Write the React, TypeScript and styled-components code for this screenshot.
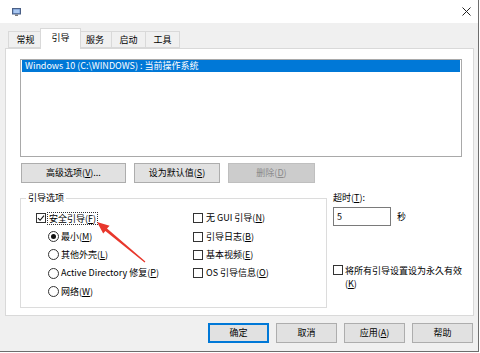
import React from "react";
import styled, { createGlobalStyle } from "styled-components";

const Global = createGlobalStyle`
  html, body { margin: 0; padding: 0; background: #fff; }
  body {
    font-family: "Noto Sans CJK SC", "Noto Sans", sans-serif;
    font-size: 9px;
    line-height: 12px;
    color: #000;
  }
  * { box-sizing: border-box; }
  u { text-underline-offset: 1px; }
`;

const Window = styled.div`
  position: relative;
  width: 479px;
  height: 352px;
  border-right: 1px solid #6d6d6d;
  border-bottom: 1px solid #6d6d6d;
  display: flex;
  flex-direction: column;
  background: #f0f0f0;
  overflow: hidden;
`;

const TitleBar = styled.div`
  height: 23px;
  flex: none;
  background: #fff;
  display: flex;
  align-items: center;
  justify-content: space-between;
  padding: 0 7px 0 12px;
`;

const TabStrip = styled.div`
  height: 25px;
  flex: none;
  display: flex;
  align-items: flex-end;
  padding-left: 9px;
  position: relative;
  z-index: 2;
`;

const Tab = styled.div<{ $active?: boolean; $w: number }>`
  width: ${(p) => p.$w}px;
  height: ${(p) => (p.$active ? 21 : 17)}px;
  margin: ${(p) => (p.$active ? "0 -2px -1px -3px" : "0 0 0 -1px")};
  border: 1px solid #d9d9d9;
  border-bottom: ${(p) => (p.$active ? "none" : "1px solid #d9d9d9")};
  background: ${(p) => (p.$active ? "#fff" : "#f0f0f0")};
  display: flex;
  align-items: center;
  justify-content: center;
  padding-bottom: ${(p) => (p.$active ? 2 : 0)}px;
  position: relative;
  z-index: ${(p) => (p.$active ? 2 : 1)};
`;

const Panel = styled.div`
  height: 268px;
  flex: none;
  margin: 0 4px 0 5px;
  border: 1px solid #d9d9d9;
  background: #fff;
  padding: 10px 11px 0 14px;
  display: flex;
  flex-direction: column;
`;

const ListBox = styled.div`
  height: 98px;
  border: 1px solid #a9a9a9;
  padding: 0 1px;
`;

const ListRow = styled.div<{ $selected?: boolean }>`
  height: 12px;
  line-height: 12px;
  padding-left: 3px;
  background: ${(p) => (p.$selected ? "#0078d7" : "transparent")};
  color: ${(p) => (p.$selected ? "#fff" : "#000")};
  white-space: nowrap;
`;

const ButtonRow = styled.div`
  display: flex;
  margin-top: 6px;
  padding-left: 1px;
  gap: 8px;
`;

const Button = styled.div<{ $w: number; $disabled?: boolean; $default?: boolean }>`
  width: ${(p) => p.$w}px;
  height: 20px;
  flex: none;
  border: 1px solid ${(p) => (p.$default ? "#0078d7" : p.$disabled ? "#bfbfbf" : "#adadad")};
  box-shadow: ${(p) => (p.$default ? "inset 0 0 0 1px #0078d7" : "none")};
  background: ${(p) => (p.$disabled ? "#cccccc" : "#e1e1e1")};
  color: ${(p) => (p.$disabled ? "#8a8a8a" : "#000")};
  display: flex;
  align-items: center;
  justify-content: center;
  white-space: nowrap;
`;

const Lower = styled.div`
  display: flex;
  margin-top: 9px;
`;

const Group = styled.fieldset`
  width: 313px;
  height: 116px;
  margin: 0;
  border: 1px solid #dcdcdc;
  padding: 5px 0 0 15px;
  display: flex;
`;

const Legend = styled.legend`
  margin-left: -10px;
  padding: 0 2px;
  line-height: 12px;
`;

const Column = styled.div<{ $w?: number }>`
  display: flex;
  flex-direction: column;
  width: ${(p) => (p.$w ? `${p.$w}px` : "auto")};
`;

const OptionRow = styled.div<{ $indent?: number; $gap?: number }>`
  height: 18.4px;
  display: flex;
  align-items: center;
  padding-left: ${(p) => p.$indent ?? 0}px;
  gap: ${(p) => p.$gap ?? 2}px;
  white-space: nowrap;
`;

const Box = styled.span`
  width: 10px;
  height: 10px;
  flex: none;
  border: 1px solid #333;
  background: #fff;
  display: inline-flex;
  align-items: center;
  justify-content: center;
`;

const Radio = styled.span<{ $on?: boolean }>`
  width: 11px;
  height: 11px;
  flex: none;
  border: 1px solid #333;
  border-radius: 50%;
  background: #fff;
  display: inline-flex;
  align-items: center;
  justify-content: center;
  &::after {
    content: "";
    display: ${(p) => (p.$on ? "block" : "none")};
    width: 5px;
    height: 5px;
    border-radius: 50%;
    background: #111;
  }
`;

const Focus = styled.span`
  outline: 1px dotted #333;
  outline-offset: 0;
  padding: 0 1px;
  line-height: 11px;
`;

const Side = styled.div`
  margin-left: 6px;
  display: flex;
  flex-direction: column;
  flex: 1;
`;

const InputRow = styled.div`
  display: flex;
  align-items: center;
  gap: 6px;
  margin-top: 3px;
`;

const Input = styled.div`
  width: 58px;
  height: 19px;
  border: 1px solid #7a7a7a;
  background: #fff;
  padding-left: 3px;
  display: flex;
  align-items: center;
`;

const PermRow = styled.div`
  display: flex;
  align-items: flex-start;
  gap: 2px;
  margin-top: 38px;
`;

const PermBox = styled(Box)`
  margin-top: 1px;
`;

const PermText = styled.div`
  display: flex;
  flex-direction: column;
  line-height: 13px;
  white-space: nowrap;
`;

const Footer = styled.div`
  display: flex;
  justify-content: flex-end;
  gap: 7px;
  padding: 7px 5px 0 0;
`;

const Arrow = styled.svg`
  position: absolute;
  left: 0;
  top: 0;
  pointer-events: none;
`;

const Check = () => (
  <svg width="8" height="8" viewBox="0 0 8 8">
    <path d="M1 4.2 L3.1 6.3 L7 1.6" fill="none" stroke="#111" strokeWidth="1.1" />
  </svg>
);

const AppIcon = () => (
  <svg width="9" height="8" viewBox="0 0 9 8">
    <rect x="0.5" y="0.5" width="8" height="5.5" fill="#6b8fc9" stroke="#4a5f85" strokeWidth="1" />
    <rect x="1.5" y="1.5" width="6" height="3.5" fill="#a9c7f0" />
    <rect x="3" y="6.5" width="3" height="1.5" fill="#7a7a7a" />
  </svg>
);

const CloseIcon = () => (
  <svg width="9" height="9" viewBox="0 0 9 9">
    <path d="M0.5 0.5 L8.5 8.5 M8.5 0.5 L0.5 8.5" stroke="#222" strokeWidth="1" />
  </svg>
);

export default function App() {
  return (
    <>
      <Global />
      <Window>
        <TitleBar>
          <AppIcon />
          <CloseIcon />
        </TitleBar>
        <TabStrip>
          <Tab $w={35}>常规</Tab>
          <Tab $w={41} $active>引导</Tab>
          <Tab $w={34}>服务</Tab>
          <Tab $w={35}>启动</Tab>
          <Tab $w={35}>工具</Tab>
        </TabStrip>
        <Panel>
          <ListBox>
            <ListRow $selected>Windows 10 (C:\WINDOWS) : 当前操作系统</ListRow>
          </ListBox>
          <ButtonRow>
            <Button $w={105}>
              高级选项(<u>V</u>)...
            </Button>
            <Button $w={86}>
              设为默认值(<u>S</u>)
            </Button>
            <Button $w={87} $disabled>
              删除(<u>D</u>)
            </Button>
          </ButtonRow>
          <Lower>
            <Group>
              <Legend>引导选项</Legend>
              <Column $w={157}>
                <OptionRow>
                  <Box>
                    <Check />
                  </Box>
                  <Focus>
                    安全引导(<u>F</u>)
                  </Focus>
                </OptionRow>
                <OptionRow $indent={12}>
                  <Radio $on />
                  <span>
                    最小(<u>M</u>)
                  </span>
                </OptionRow>
                <OptionRow $indent={12}>
                  <Radio />
                  <span>
                    其他外壳(<u>L</u>)
                  </span>
                </OptionRow>
                <OptionRow $indent={12}>
                  <Radio />
                  <span>
                    Active Directory 修复(<u>P</u>)
                  </span>
                </OptionRow>
                <OptionRow $indent={12}>
                  <Radio />
                  <span>
                    网络(<u>W</u>)
                  </span>
                </OptionRow>
              </Column>
              <Column>
                <OptionRow $gap={3}>
                  <Box />
                  <span>
                    无 GUI 引导(<u>N</u>)
                  </span>
                </OptionRow>
                <OptionRow $gap={3}>
                  <Box />
                  <span>
                    引导日志(<u>B</u>)
                  </span>
                </OptionRow>
                <OptionRow $gap={3}>
                  <Box />
                  <span>
                    基本视频(<u>E</u>)
                  </span>
                </OptionRow>
                <OptionRow $gap={3}>
                  <Box />
                  <span>
                    OS 引导信息(<u>O</u>)
                  </span>
                </OptionRow>
              </Column>
            </Group>
            <Side>
              <span>
                超时(<u>T</u>):
              </span>
              <InputRow>
                <Input>5</Input>
                <span>秒</span>
              </InputRow>
              <PermRow>
                <PermBox />
                <PermText>
                  <span>将所有引导设置设为永久有效</span>
                  <span>
                    (<u>K</u>)
                  </span>
                </PermText>
              </PermRow>
            </Side>
          </Lower>
        </Panel>
        <Footer>
          <Button $w={61} $default>
            确定
          </Button>
          <Button $w={61}>取消</Button>
          <Button $w={61}>
            应用(<u>A</u>)
          </Button>
          <Button $w={61}>帮助</Button>
        </Footer>
        <Arrow width="480" height="353" viewBox="0 0 480 353">
          <polygon
            points="97,222 109.6,225.7 107.0,228.6 145.4,261.4 144.6,262.6 105.4,231.0 103.2,233.6"
            fill="#e8372c"
          />
        </Arrow>
      </Window>
    </>
  );
}
